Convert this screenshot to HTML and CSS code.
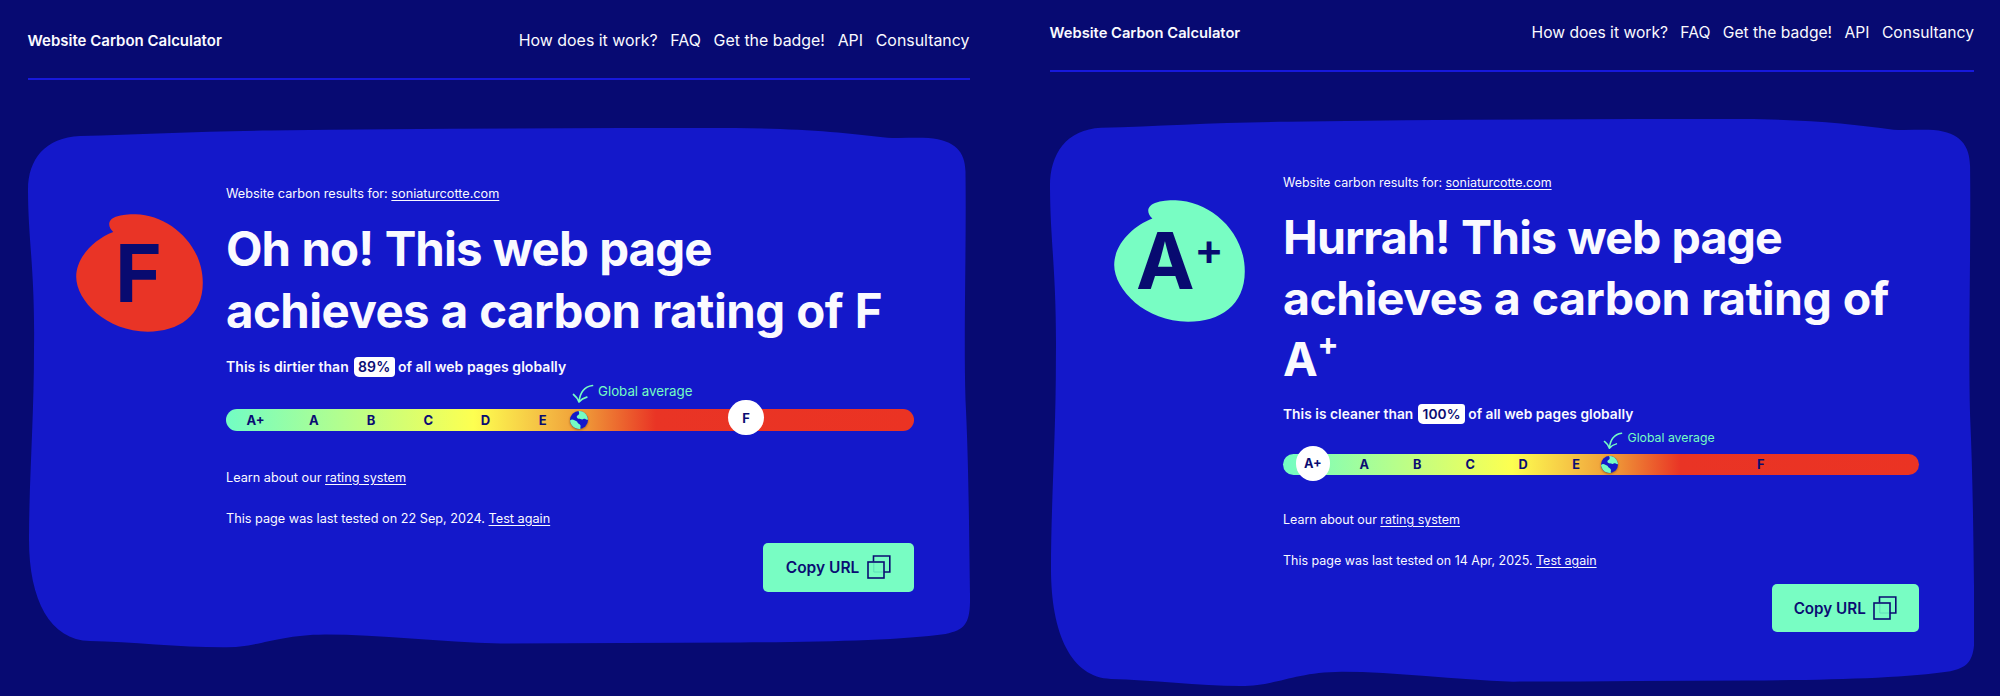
FILE: index.html
```html
<!DOCTYPE html>
<html lang="en">
<head>
<meta charset="utf-8">
<title>Website Carbon Calculator</title>
<link rel="stylesheet" href="styles.css">
</head>
<body>
<svg class="defs" width="0" height="0" aria-hidden="true">
  <symbol id="blob" viewBox="28 128.5 941.5 519" preserveAspectRatio="none">
    <path d="M80 136.5C140 135 200 131.5 270 131C420 129 580 128.5 735 128.5C800 129 845 133 887 138.3C900 138.8 915 138 928 138.5C955 141 964.5 152 965 172C966 250 963 330 965 400C968 460 968.5 520 969.5 595C970 622 966 630 945 634C900 640 830 642 740 642.5C660 642.5 580 643.5 500 643.5C440 642 380 634.5 325 634.5C275 635 260 647.5 222 647.5C180 647 130 642 90 641C50 640 29 600 29 540C29 480 34 420 34 348C35 270 28 240 28 190C28 160 45 138 80 136.5Z"/>
  </symbol>
  <symbol id="splotch" viewBox="15.3 14 126.9 118.3" preserveAspectRatio="none">
    <path d="M52.5 32C47 27 46.500 20 55 16.800C61 14.500 68 14.200 75 14.200C108 15 142 44 142 83C142 116 118 132 87 132C46 132 15.500 101 15.500 77C15.500 57 34 39 52.500 32Z"/>
  </symbol>
  <symbol id="globe" viewBox="0 0 18 18">
    <circle cx="9" cy="9" r="9" fill="#1418ca"/>
    <path fill="#75fdc3" d="M8.500 0C13.500 -0.300 17.500 3.500 18 8.500C17 9 16 8.500 15 7.800C13.500 7.500 13 9 11.500 8.300C10 7.500 9 8.500 7.500 7.200C6.500 6.500 6.500 5 7.500 4.500C9.500 3.500 9.500 2 8.500 0ZM0 9.500C1.500 8 3 8.300 4.500 9.300C6 10.200 7 10 7.500 11.500C8 12.800 10 13 10.500 14.500C10.800 16 10 17 10.500 17.900C5 18.500 0.500 14.500 0 9.500Z"/>
  </symbol>
  <symbol id="arrow" viewBox="0 0 22 20">
    <path fill="none" stroke="#75fdc3" stroke-width="1.700" stroke-linecap="round" stroke-linejoin="round" d="M20.500 1.500C13 2.500 8 8 7 18M1.500 10.500C4 12.500 6 15 7 18C9 15.500 11.500 14 14.800 13.200"/>
  </symbol>
  <symbol id="copy" viewBox="0 0 24 24">
    <path fill="none" stroke="#5fdcba" stroke-width="1" d="M6.800 8V17H16"/>
    <g fill="none" stroke="#0a0c72" stroke-width="1.600"><path d="M6.500 6.500V1H22.800V17H17"/><rect x="1" y="7" width="16" height="16"/></g>
  </symbol>
</svg>
<main class="page">
  <section class="shot shot-f">
    <header class="top">
      <strong class="brand">Website Carbon Calculator</strong>
      <nav class="nav"><a>How does it work?</a><a>FAQ</a><a>Get the badge!</a><a>API</a><a>Consultancy</a></nav>
    </header>
    <article class="card">
      <svg class="blob"><use href="#blob"/></svg>
      <div class="grade">
        <svg class="splotch"><use href="#splotch"/></svg>
        <span class="letter">F</span>
      </div>
      <div class="content">
        <p class="results">Website carbon results for: <a class="link">soniaturcotte.com</a></p>
        <h1 class="title"><span class="line wide">Oh no! This web page</span><span class="line">achieves a carbon rating of F</span></h1>
        <p class="compare">This is dirtier than <span class="badge">89%</span> of all web pages globally</p>
        <p class="average"><svg class="arrow"><use href="#arrow"/></svg><span>Global average</span></p>
        <div class="scale">
          <span class="cell first">A+</span><span class="cell">A</span><span class="cell">B</span><span class="cell">C</span><span class="cell">D</span><span class="cell">E</span>
          <span class="cell last"><span class="knob">F</span></span>
          <svg class="globe"><use href="#globe"/></svg>
        </div>
        <p class="learn">Learn about our <a class="link">rating system</a></p>
        <p class="tested">This page was last tested on 22 Sep, 2024. <a class="link">Test again</a></p>
        <button class="copy">Copy URL<svg class="icon"><use href="#copy"/></svg></button>
      </div>
    </article>
  </section>
  <section class="shot shot-a">
    <header class="top">
      <strong class="brand">Website Carbon Calculator</strong>
      <nav class="nav"><a>How does it work?</a><a>FAQ</a><a>Get the badge!</a><a>API</a><a>Consultancy</a></nav>
    </header>
    <article class="card">
      <svg class="blob"><use href="#blob"/></svg>
      <div class="grade">
        <svg class="splotch"><use href="#splotch"/></svg>
        <span class="letter">A<span class="plus">+</span></span>
      </div>
      <div class="content">
        <p class="results">Website carbon results for: <a class="link">soniaturcotte.com</a></p>
        <h1 class="title"><span class="line wide">Hurrah! This web page</span><span class="line">achieves a carbon rating of</span><span class="line">A<span class="plus">+</span></span></h1>
        <p class="compare">This is cleaner than <span class="badge">100%</span> of all web pages globally</p>
        <p class="average"><svg class="arrow"><use href="#arrow"/></svg><span>Global average</span></p>
        <div class="scale">
          <span class="cell first"><span class="knob">A+</span></span><span class="cell">A</span><span class="cell">B</span><span class="cell">C</span><span class="cell">D</span><span class="cell">E</span>
          <span class="cell last">F</span>
          <svg class="globe"><use href="#globe"/></svg>
        </div>
        <p class="learn">Learn about our <a class="link">rating system</a></p>
        <p class="tested">This page was last tested on 14 Apr, 2025. <a class="link">Test again</a></p>
        <button class="copy">Copy URL<svg class="icon"><use href="#copy"/></svg></button>
      </div>
    </article>
  </section>
</main>
</body>
</html>
```
FILE: styles.css
```css
* { box-sizing: border-box; margin: 0; }
body { background: #070a72; color: #fafaff; font-family: Inter, sans-serif; overflow: hidden; }
.defs { position: absolute; }
.page { display: flex; width: 2000px; height: 696px; }
.shot { width: 1000px; font-size: 10px; }
.shot-f { padding: 0 30.5px 0 27.500px; }
.shot-a { padding: 0 26px 0 49.500px; font-size: 9.82px; }

.top { display: flex; justify-content: space-between; border-bottom: 2px solid #1719dc; white-space: nowrap; }
.shot-f .top { height: 80px; padding-top: 29px; margin-bottom: 48px; }
.shot-a .top { height: 71.500px; padding-top: 21px; margin-bottom: 47.500px; }
.brand { font-size: 1.500em; font-weight: 600; line-height: 24px; }
.nav { display: flex; gap: 12.700px; font-size: 1.592em; line-height: 24px; }
.shot-a .nav { gap: 12.400px; }

.card { position: relative; display: flex; }
.shot-f .card { height: 519.500px; }
.shot-a .card { height: 567px; }
.blob { position: absolute; left: 0; top: 0; width: 100%; height: 100%; fill: #1418ca; }
.grade { position: relative; flex: none; font-weight: 600; color: #080a70; }
.splotch { display: block; width: 100%; height: 100%; }
.shot-f .grade { width: 127px; height: 118px; margin: 86px 23.500px 0 48px; }
.shot-a .grade { width: 131px; height: 122px; margin: 81px 38px 0 64.500px; }
.shot-f .splotch { fill: #e93426; }
.shot-a .splotch { fill: #78fdc3; }
.letter { position: absolute; font-size: 80px; line-height: 80px; font-weight: 700; }
.shot-f .letter { left: 39.500px; top: 18.700px; }
.shot-a .letter { left: 22px; top: 20.500px; font-size: 78.500px; white-space: nowrap; }
.plus { font-size: .680em; line-height: 0; position: relative; top: -.650em; }
.letter .plus { font-size: .560em; top: -.540em; font-weight: 600; margin-left: -.010em; }

.content { position: relative; flex: none; display: flex; flex-direction: column; align-items: flex-start; }
.shot-f .content { width: 687.500px; padding-top: 55.500px; }
.shot-a .content { width: 636px; padding-top: 53.800px; }
.results, .learn, .tested { font-size: 1.270em; line-height: 20px; }
.link { text-decoration: underline; text-underline-offset: 2px; }
.title { font-size: 4.740em; font-weight: 650; line-height: 62.300px; margin-top: 14px; white-space: nowrap; letter-spacing: -.0115em; word-spacing: .020em; }
.shot-a .title { line-height: 61px; }
.line { display: block; }
.wide { letter-spacing: -.0190em; }
.compare { font-size: 1.400em; font-weight: 600; line-height: 20px; margin-top: 14.500px; white-space: nowrap; letter-spacing: .003em; }
.shot-a .compare { margin-top: 14.200px; }
.badge { display: inline-block; padding: 0 4.500px; margin: 0 -.500px 0 1.200px; background: #fff; color: #0a0c72; font-size: 1em; letter-spacing: .010em; border-radius: 4px 3px 4px 5px; }
.average { display: flex; gap: 4.500px; align-items: center; height: 18px; font-size: 1.330em; line-height: 18px; color: #75fdc3; margin: 5.600px 0 8.500px 345.500px; }
.arrow { width: 22px; height: 20px; position: relative; top: 3px; }
.shot-a .average { font-size: 1.250em; margin: 5px 0 7.300px 320px; }
.shot-a .arrow { width: 20px; height: 18px; }

.scale { position: relative; display: flex; align-items: center; width: 100%; height: 22px; border-radius: 11px; background: linear-gradient(90deg, #72fdc4 0, #fdff50 36%, #f5c044 46%, #ef9a38 52%, #e93425 62.500%, #eb3323 100%); color: #0a0c72; font-size: 1.300em; font-weight: 700; }
.shot-a .scale { height: 20.500px; }
.cell { width: 8.330%; display: flex; justify-content: center; }
.first { width: 8.600%; }
.last { width: 49.750%; }
.knob { flex: none; display: flex; align-items: center; justify-content: center; width: 35.500px; height: 35.500px; margin: -10px 0; border-radius: 50%; background: #fff; position: relative; top: -2px; left: 3.500px; }
.shot-a .knob { width: 34.500px; height: 34.500px; top: -1px; left: 2.500px; }
.globe { position: absolute; top: 2px; width: 18px; height: 18px; left: calc(51.400% - 9px); filter: drop-shadow(0 1.500px 1px rgba(90, 50, 20, .55)); }
.shot-a .globe { top: 2px; width: 17px; height: 17px; }

.learn { margin-top: 37px; }
.shot-a .learn { margin-top: 35px; }
.tested { margin-top: 21px; }
.copy { align-self: flex-end; display: flex; align-items: center; justify-content: center; gap: 7.500px; width: 150.500px; height: 49.500px; margin-top: 14px; padding: 0; border: 0; border-radius: 5px; background: #78fdc3; color: #0a0c72; font: 600 1.550em Inter, sans-serif; }
.shot-a .copy { width: 147px; height: 48px; margin-top: 13.300px; }
.icon { width: 24px; height: 24px; }
```
